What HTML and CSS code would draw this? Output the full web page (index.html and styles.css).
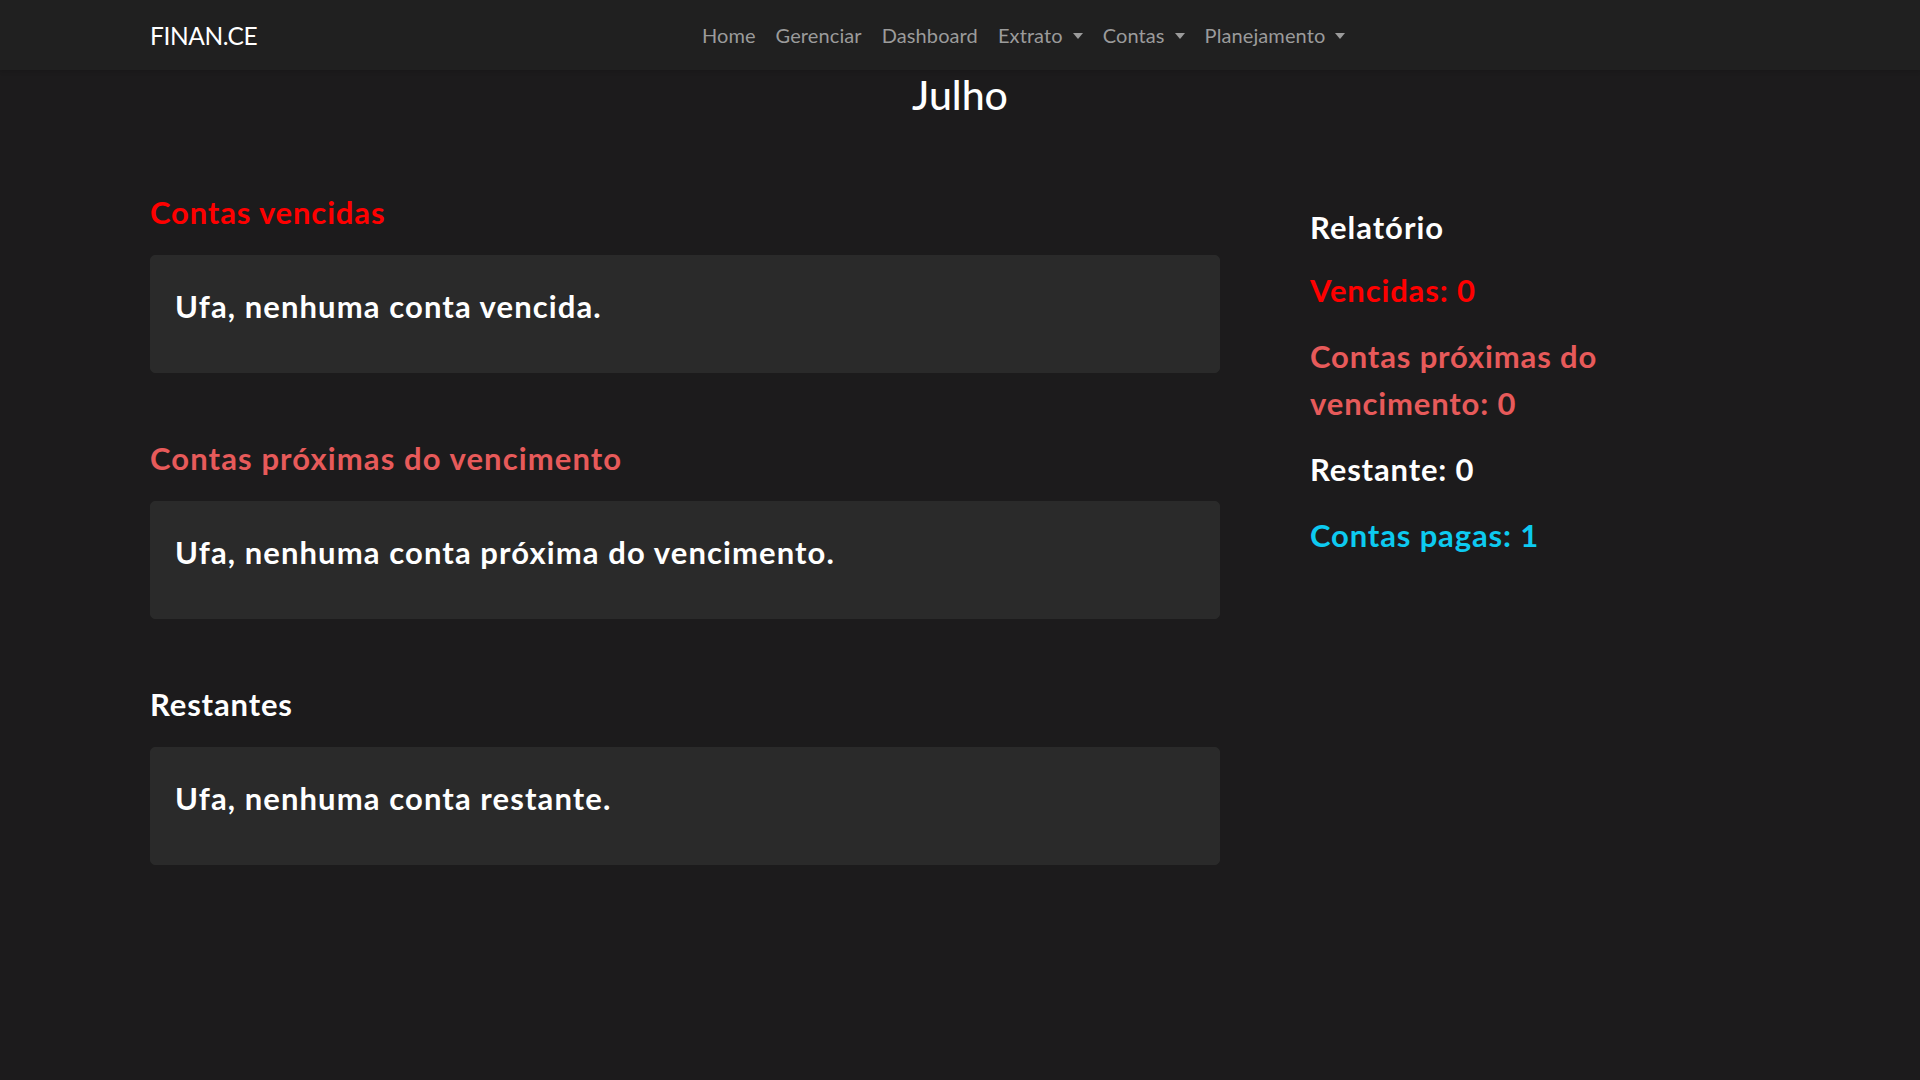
FILE: index.html
```html
<!DOCTYPE html>
<html lang="pt-BR">
<head>
<meta charset="utf-8">
<title>FINAN.CE</title>
<link rel="stylesheet" href="styles.css">
</head>
<body>
<nav class="navbar">
  <div class="container nav-inner">
    <a class="brand" href="#">FINAN.CE</a>
    <ul class="nav">
      <li><a class="nav-link" href="#">Home</a></li>
      <li><a class="nav-link" href="#">Gerenciar</a></li>
      <li><a class="nav-link" href="#">Dashboard</a></li>
      <li><a class="nav-link dropdown" href="#">Extrato</a></li>
      <li><a class="nav-link dropdown" href="#">Contas</a></li>
      <li><a class="nav-link dropdown" href="#">Planejamento</a></li>
    </ul>
  </div>
</nav>

<main class="container">
  <h2 class="month">Julho</h2>
  <div class="row">
    <section class="col-main">
      <h4 class="sec-title red">Contas vencidas</h4>
      <div class="card"><h4 class="card-text">Ufa, nenhuma conta vencida.</h4></div>

      <h4 class="sec-title salmon wide">Contas próximas do vencimento</h4>
      <div class="card"><h4 class="card-text">Ufa, nenhuma conta próxima do vencimento.</h4></div>

      <h4 class="sec-title">Restantes</h4>
      <div class="card"><h4 class="card-text">Ufa, nenhuma conta restante.</h4></div>
    </section>
    <aside class="col-side">
      <h4 class="side-title">Relatório</h4>
      <p class="stat red">Vencidas: 0</p>
      <p class="stat salmon">Contas próximas do vencimento: 0</p>
      <p class="stat">Restante: 0</p>
      <p class="stat cyan">Contas pagas: 1</p>
    </aside>
  </div>
</main>
</body>
</html>
```
FILE: styles.css
```css
* { box-sizing: border-box; }

html, body {
  margin: 0;
  padding: 0;
}

body {
  background: #1c1b1c;
  color: #ffffff;
  font-family: "Lato", "Noto Sans", "Liberation Sans", sans-serif;
  min-height: 1080px;
}

.container {
  width: 1620px;
  margin: 0 auto;
}

/* ---------- navbar ---------- */
.navbar {
  background: #202020;
  height: 70px;
  box-shadow: 0 2px 4px rgba(0, 0, 0, 0.12);
}

.nav-inner {
  display: flex;
  align-items: center;
  height: 70px;
}

.brand {
  color: #ffffff;
  text-decoration: none;
  font-size: 24.5px;
  line-height: 37px;
  margin-right: 20px;
  letter-spacing: -0.4px;
}

.nav {
  list-style: none;
  margin: 0;
  padding: 0;
  display: flex;
  flex: 1;
  justify-content: center;
}

.nav-link {
  display: flex;
  align-items: center;
  color: #9b9b9b;
  text-decoration: none;
  font-size: 20px;
  line-height: 30px;
  padding: 10px 10px;
  letter-spacing: 0.1px;
}

.nav-link.dropdown::after {
  content: "";
  display: inline-block;
  margin-left: 10px;
  border-top: 6px solid #9b9b9b;
  border-left: 5.5px solid transparent;
  border-right: 5.5px solid transparent;
  margin-top: 1px;
}

/* ---------- page ---------- */
.month {
  margin: 0;
  text-align: center;
  font-size: 41px;
  font-weight: 500;
  line-height: 48px;
  padding-top: 1px;
}

.row {
  display: grid;
  grid-template-columns: 1070px 1fr;
  column-gap: 90px;
  margin-top: 75px;
}

.sec-title {
  margin: 0 0 25px;
  font-size: 31px;
  line-height: 36px;
  font-weight: 700;
  letter-spacing: 0.85px;
}

.sec-title.wide { letter-spacing: 1.1px; }

.card {
  background: #2a2a2a;
  border: 1px solid #2a2a2a;
  border-radius: 5px;
  padding: 32px 24px 30px;
  margin-bottom: 67px;
}

.card:last-child { margin-bottom: 0; }

.card-text {
  margin: 0 0 18px;
  font-size: 31px;
  line-height: 36px;
  font-weight: 700;
  letter-spacing: 1.1px;
}

.col-side {
  padding-top: 15px;
  display: flex;
  flex-direction: column;
  gap: 19px;
}

.side-title {
  margin: 0 0 3px;
  font-size: 31px;
  line-height: 36px;
  font-weight: 700;
  letter-spacing: 1px;
}

.stat {
  margin: 0;
  font-size: 31px;
  line-height: 47px;
  font-weight: 700;
  width: 320px;
  letter-spacing: 0.85px;
}

.red { color: #ff0000; }
.salmon { color: #e75a5a; }
.cyan { color: #0dcaf0; }
```
